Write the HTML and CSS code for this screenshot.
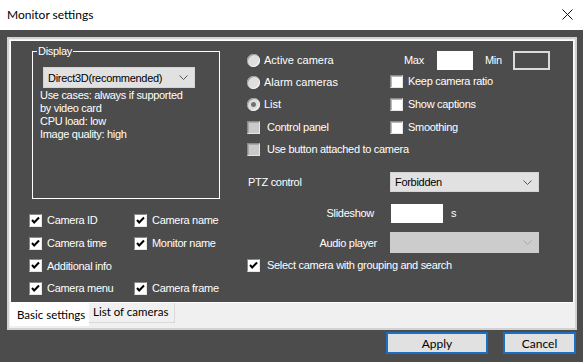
FILE: index.html
```html
<!DOCTYPE html>
<html lang="en">

<head>
    <meta charset="UTF-8">
    <title>Monitor settings</title>
    <link rel="stylesheet" href="styles.css">
</head>

<body>
    <div id="window">
        <header id="titlebar">
            <span class="title">Monitor settings</span>
            <svg class="close" width="11" height="11" viewBox="0 0 11 11">
                <path d="M0.5 0.5 L10.5 10.5 M10.5 0.5 L0.5 10.5" stroke="#111" stroke-width="1" fill="none" />
            </svg>
        </header>
        <section id="content">
            <div class="tabs">
                <div class="page">
                    <div class="colLeft">
                        <fieldset class="display">
                            <legend>Display</legend>
                            <div class="select displaySelect">
                                <span>Direct3D(recommended)</span>
                                <svg class="chev" width="9" height="5" viewBox="0 0 9 5"><path d="M0.5 0.5 L4.5 4.5 L8.5 0.5" stroke="#555" fill="none" /></svg>
                            </div>
                            <p class="desc">Use cases: always if supported<br>by video card<br>CPU load: low<br>Image quality: high</p>
                        </fieldset>
                        <div class="flags">
                            <label class="check"><span class="box"><svg width="11" height="11" viewBox="0 0 11 11"><path d="M2 5 L4.2 7.5 L9 2.5" stroke="#000" stroke-width="2" fill="none" /></svg></span>Camera ID</label>
                            <label class="check"><span class="box"><svg width="11" height="11" viewBox="0 0 11 11"><path d="M2 5 L4.2 7.5 L9 2.5" stroke="#000" stroke-width="2" fill="none" /></svg></span>Camera name</label>
                            <label class="check"><span class="box"><svg width="11" height="11" viewBox="0 0 11 11"><path d="M2 5 L4.2 7.5 L9 2.5" stroke="#000" stroke-width="2" fill="none" /></svg></span>Camera time</label>
                            <label class="check"><span class="box"><svg width="11" height="11" viewBox="0 0 11 11"><path d="M2 5 L4.2 7.5 L9 2.5" stroke="#000" stroke-width="2" fill="none" /></svg></span>Monitor name</label>
                            <label class="check"><span class="box"><svg width="11" height="11" viewBox="0 0 11 11"><path d="M2 5 L4.2 7.5 L9 2.5" stroke="#000" stroke-width="2" fill="none" /></svg></span>Additional info</label>
                            <span></span>
                            <label class="check"><span class="box"><svg width="11" height="11" viewBox="0 0 11 11"><path d="M2 5 L4.2 7.5 L9 2.5" stroke="#000" stroke-width="2" fill="none" /></svg></span>Camera menu</label>
                            <label class="check"><span class="box"><svg width="11" height="11" viewBox="0 0 11 11"><path d="M2 5 L4.2 7.5 L9 2.5" stroke="#000" stroke-width="2" fill="none" /></svg></span>Camera frame</label>
                        </div>
                    </div>
                    <div class="colRight">
                        <div class="row r1">
                            <label class="radio"><span class="dot"></span>Active camera</label>
                            <div class="sizes">
                                <span class="maxLabel">Max</span>
                                <span class="field maxField"></span>
                                <span class="minLabel">Min</span>
                                <span class="field minField"></span>
                            </div>
                        </div>
                        <div class="row r2">
                            <label class="radio"><span class="dot"></span>Alarm cameras</label>
                            <label class="check"><span class="box plain"></span>Keep camera ratio</label>
                        </div>
                        <div class="row r3">
                            <label class="radio"><span class="dot on"></span>List</label>
                            <label class="check"><span class="box plain"></span>Show captions</label>
                        </div>
                        <div class="row r4">
                            <label class="check wide"><span class="box off"></span>Control panel</label>
                            <label class="check"><span class="box plain"></span>Smoothing</label>
                        </div>
                        <div class="row r5">
                            <label class="check wide span"><span class="box off"></span>Use button attached to camera</label>
                        </div>
                        <div class="row r6">
                            <span class="ptzLabel">PTZ control</span>
                            <div class="select wideSelect">
                                <span>Forbidden</span>
                                <svg class="chev" width="9" height="5" viewBox="0 0 9 5"><path d="M0.5 0.5 L4.5 4.5 L8.5 0.5" stroke="#555" fill="none" /></svg>
                            </div>
                        </div>
                        <div class="row r7">
                            <span class="rightLabel slideLabel">Slideshow</span>
                            <div class="slide">
                                <span class="field slideField"></span>
                                <span class="unit">s</span>
                            </div>
                        </div>
                        <div class="row r8">
                            <span class="rightLabel audioLabel">Audio player</span>
                            <div class="select wideSelect disabled">
                                <span></span>
                                <svg class="chev" width="9" height="5" viewBox="0 0 9 5"><path d="M0.5 0.5 L4.5 4.5 L8.5 0.5" stroke="#a8a8a8" fill="none" /></svg>
                            </div>
                        </div>
                        <div class="row r9">
                            <label class="check wide span"><span class="box"><svg width="11" height="11" viewBox="0 0 11 11"><path d="M2 5 L4.2 7.5 L9 2.5" stroke="#000" stroke-width="2" fill="none" /></svg></span>Select camera with grouping and search</label>
                        </div>
                    </div>
                </div>
                <div class="tabStrip">
                    <span class="tab active">Basic settings</span>
                    <span class="tab">List of cameras</span>
                </div>
            </div>
            <div class="buttons">
                <button class="btn applyBtn">Apply</button>
                <button class="btn cancelBtn">Cancel</button>
            </div>
        </section>
    </div>
</body>

</html>
```
FILE: styles.css
```css
body {
    margin: 0;
    padding: 0;
    width: 583px;
    height: 362px;
    overflow: hidden;
    font-family: 'Liberation Sans', Arial, sans-serif;
    font-size: 11px;
    letter-spacing: -0.3px;
}

#window {
    width: 583px;
    height: 362px;
    display: flex;
    flex-direction: column;
}

#titlebar {
    height: 30px;
    background: #fff;
    display: flex;
    align-items: center;
    justify-content: space-between;
    padding: 0 10px 1px 7px;
    box-sizing: border-box;
}

#titlebar .title {
    font-family: 'Lato', sans-serif;
    font-size: 12px;
    letter-spacing: 0;
    color: #000;
}

#content {
    flex: 1;
    background: #4c4c4c;
    padding: 7px 6px 0 7px;
}

.tabs {
    width: 570px;
    box-sizing: border-box;
    border: 2px solid #d2d2d2;
    padding: 1px;
    background: #f0f0f0;
}

.page {
    height: 261px;
    border: 1px solid #fff;
    background: #4c4c4c;
    color: #fff;
    display: flex;
}

.colLeft {
    width: 236px;
}

.display {
    margin: 4px 0 0 21px;
    padding: 0;
    width: 188px;
    height: 154px;
    box-sizing: border-box;
    border: 1px solid #fff;
}

.display legend {
    margin-left: 4px;
    padding: 0 1px;
    line-height: 13px;
}

.select {
    display: flex;
    align-items: center;
    justify-content: space-between;
    box-sizing: border-box;
    background: #e1e1e1;
    border: 1px solid #d4d4d4;
    color: #000;
    padding: 0 6px 0 4px;
}

.displaySelect {
    margin: 9px 0 0 10px;
    width: 152px;
    height: 21px;
}

.desc {
    margin: 1px 0 0 7px;
    line-height: 13px;
}

.flags {
    margin: 10px 0 0 18px;
    display: grid;
    grid-template-columns: 105px 1fr;
    grid-auto-rows: 22.7px;
    align-items: center;
}

.check,
.radio {
    display: flex;
    align-items: center;
    gap: 5px;
    white-space: nowrap;
}

.check.wide {
    gap: 7px;
}

.radio {
    gap: 4px;
    letter-spacing: 0;
}

.box {
    width: 13px;
    height: 13px;
    box-sizing: border-box;
    background: #fff;
    border: 1px solid;
    border-color: #8a8a8a #e6e6e6 #e6e6e6 #8a8a8a;
    display: flex;
    align-items: center;
    justify-content: center;
}

.box.plain {
    box-shadow: inset 1px 1px 0 #b8b8b8;
}

.box.off {
    background: #c9c9c9;
    box-shadow: inset 1px 1px 0 #a8a8a8;
}

.dot {
    width: 13px;
    height: 13px;
    box-sizing: border-box;
    border-radius: 50%;
    background: #dedede;
    box-shadow: inset 1px 1px 0 #9c9c9c, inset -1px -1px 0 #f2f2f2;
    display: flex;
    align-items: center;
    justify-content: center;
}

.dot.on::after {
    content: '';
    width: 5px;
    height: 5px;
    border-radius: 50%;
    background: #707070;
}

.colRight {
    flex: 1;
    padding-top: 9px;
}

.row {
    display: grid;
    grid-template-columns: 143px 1fr;
    align-items: center;
}

.row .span {
    grid-column: 1 / 3;
}

.r1 { height: 20px; }
.r2 { height: 22px; }
.r3 { height: 24px; }
.r4 { height: 22px; }
.r5 { height: 22px; }
.r6 { height: 20px; margin-top: 12px; }
.r7 { height: 20px; margin-top: 11px; }
.r8 { height: 21px; margin-top: 9px; }
.r9 { height: 24px; }

.r2 .radio {
    padding-top: 2px;
}

.sizes {
    display: flex;
    align-items: center;
}

.maxLabel {
    margin-left: 14px;
}

.field {
    display: block;
    height: 19px;
    box-sizing: border-box;
    background: #fff;
}

.maxField {
    width: 36px;
    margin-left: 13px;
}

.minLabel {
    margin-left: 12px;
}

.minField {
    width: 37px;
    margin-left: 11px;
    background: transparent;
    border: 2px solid #dadada;
}

.ptzLabel {
    padding-left: 1px;
}

.wideSelect {
    width: 149px;
    height: 20px;
}

.wideSelect.disabled {
    height: 21px;
    background: #cccccc;
    border-color: #cccccc;
}

.rightLabel {
    text-align: right;
}

.slideLabel {
    padding-right: 16px;
}

.audioLabel {
    padding-right: 13px;
}

.slide {
    display: flex;
    align-items: center;
}

.slideField {
    width: 52px;
    margin-left: 1px;
}

.unit {
    margin-left: 8px;
}

.tabStrip {
    height: 24px;
    display: flex;
    align-items: flex-start;
    font-family: 'Lato', sans-serif;
    font-size: 11.5px;
    letter-spacing: 0;
    color: #000;
}

.tab {
    box-sizing: border-box;
    height: 20px;
    padding: 2px 6px 0 4px;
    border-right: 1px solid #d9d9d9;
    border-bottom: 1px solid #d9d9d9;
    white-space: nowrap;
}

.tab.active {
    background: #fff;
    height: 23px;
    padding: 5px 0 0 7px;
    border: none;
    width: 79px;
}

.buttons {
    display: flex;
    justify-content: flex-end;
    gap: 15px;
    margin-top: 2px;
    padding-right: 1px;
}

.btn {
    height: 22px;
    box-sizing: border-box;
    background: #e1e1e1;
    border: 2px solid #1a6fc2;
    font-family: 'Lato', sans-serif;
    font-size: 12px;
    color: #000;
    padding: 0;
}

.applyBtn {
    width: 102px;
}

.cancelBtn {
    width: 73px;
}
```
